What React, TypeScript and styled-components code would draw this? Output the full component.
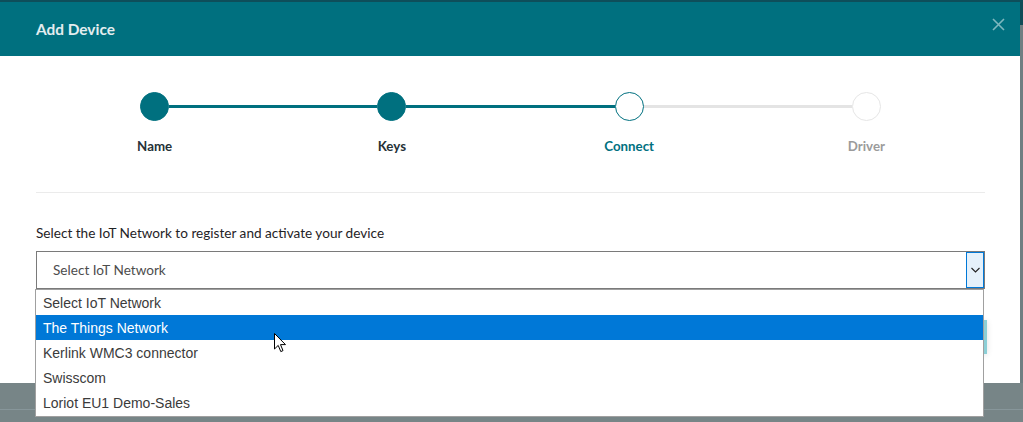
import React from "react";
import styled, { createGlobalStyle } from "styled-components";

const teal = "#00707f";

const GlobalStyle = createGlobalStyle`
    html, body {
        margin: 0;
        padding: 0;
        background: #778587;
        overflow: hidden;
    }
    * {
        box-sizing: border-box;
    }
`;

const Page = styled.div`
    position: relative;
    width: 1023px;
    height: 422px;
    overflow: hidden;
    display: flex;
    flex-direction: column;
    background: #778587;
    font-family: Lato, "Open Sans", sans-serif;
`;

const NavPeek = styled.div`
    height: 2px;
    flex: none;
    background: #0e4e5a;
`;

const Stage = styled.div`
    display: flex;
    flex: none;
`;

const ScrollStrip = styled.div`
    flex: 1;
    background: linear-gradient(#0f4c57 0 23px, #6f7f82 23px);
`;

const Modal = styled.div`
    width: 1020px;
    height: 381px;
    display: flex;
    flex-direction: column;
    background: #fff;
`;

const Header = styled.div`
    height: 54px;
    flex: none;
    display: flex;
    align-items: center;
    justify-content: space-between;
    padding: 0 15px 0 36px;
    background: ${teal};
`;

const Title = styled.h1`
    margin: 0;
    font-size: 15.4px;
    font-weight: 700;
    color: #e4edef;
`;

const CloseButton = styled.button`
    display: flex;
    border: none;
    background: none;
    padding: 0;
    margin-top: -9px;
    cursor: pointer;
`;

const Body = styled.div`
    flex: 1;
    display: flex;
    flex-direction: column;
    padding: 36px 35px 0 36px;
`;

const Stepper = styled.div`
    display: grid;
    grid-template-columns: repeat(4, 1fr);
`;

const Step = styled.div`
    display: flex;
    flex-direction: column;
    align-items: center;
`;

const Track = styled.div`
    width: 100%;
    height: 29px;
    display: flex;
    align-items: center;
`;

const Segment = styled.div<{ $done?: boolean; $hidden?: boolean }>`
    flex: 1;
    height: 3px;
    background: ${(p) => (p.$hidden ? "transparent" : p.$done ? teal : "#e4e4e4")};
`;

const Dot = styled.div<{ $state: StepState }>`
    flex: none;
    width: 29px;
    height: 29px;
    border-radius: 50%;
    background: ${(p) => (p.$state === "done" ? teal : "#fff")};
    border: 1px solid ${(p) => (p.$state === "todo" ? "#e6e6e6" : teal)};
`;

const StepLabel = styled.div<{ $state: StepState }>`
    margin-top: 17px;
    font-size: 13.3px;
    font-weight: 700;
    line-height: 16px;
    color: ${(p) => (p.$state === "done" ? "#263238" : p.$state === "current" ? teal : "#9b9b9b")};
`;

const Divider = styled.hr`
    margin: 38px 0 0;
    border: none;
    border-top: 1px solid #ebebeb;
`;

const FieldLabel = styled.label`
    display: block;
    margin-top: 32px;
    font-size: 13.6px;
    line-height: 16px;
    color: #1f2326;
`;

const SelectWrap = styled.div`
    position: relative;
    margin-top: 10px;
`;

const SelectBox = styled.div`
    height: 38px;
    display: flex;
    align-items: center;
    justify-content: space-between;
    border: 1px solid #7a7a7a;
    padding-left: 16px;
    font-size: 13.6px;
    color: #4d4d4d;
`;

const ArrowButton = styled.div`
    width: 18px;
    height: 36px;
    display: flex;
    align-items: center;
    justify-content: center;
    background: #e5f1fb;
    border: 1px solid #0078d7;
`;

const OptionList = styled.ul`
    position: absolute;
    top: 100%;
    left: -1px;
    right: 1px;
    z-index: 2;
    margin: 0;
    padding: 0;
    list-style: none;
    background: #fff;
    border: 1px solid #a0a0a0;
`;

const Option = styled.li<{ $active?: boolean }>`
    height: 25.2px;
    display: flex;
    align-items: center;
    padding-left: 7px;
    font-family: "Liberation Sans", Arial, sans-serif;
    font-size: 14px;
    color: ${(p) => (p.$active ? "#fff" : "#3b3b3b")};
    background: ${(p) => (p.$active ? "#0078d7" : "transparent")};
`;

const Actions = styled.div`
    display: flex;
    justify-content: flex-end;
    margin-top: 31px;
    margin-right: -2px;
`;

const NextButton = styled.button`
    width: 120px;
    height: 34px;
    border: none;
    background: #8ccfd6;
    box-shadow: 0 1px 6px rgba(0, 0, 0, 0.12);
    color: #fff;
    font: 700 13px Lato, sans-serif;
`;

const BackdropLine = styled.div`
    margin-top: 26px;
    height: 1px;
    background: #87969a;
`;

const Pointer = styled.svg`
    position: absolute;
    left: 274px;
    top: 333px;
    z-index: 5;
`;

type StepState = "done" | "current" | "todo";

const steps: { name: string; state: StepState }[] = [
    { name: "Name", state: "done" },
    { name: "Keys", state: "done" },
    { name: "Connect", state: "current" },
    { name: "Driver", state: "todo" },
];

const networks = [
    "Select IoT Network",
    "The Things Network",
    "Kerlink WMC3 connector",
    "Swisscom",
    "Loriot EU1 Demo-Sales",
];

export default function App() {
    const current = steps.findIndex((s) => s.state === "current");
    return (
        <Page>
            <GlobalStyle />
            <NavPeek />
            <Stage>
                <Modal>
                    <Header>
                        <Title>Add Device</Title>
                        <CloseButton aria-label="Close">
                            <svg width="13" height="13" viewBox="0 0 13 13">
                                <path d="M1 1 L12 12 M12 1 L1 12" stroke="#7fb8bf" strokeWidth="1.6" />
                            </svg>
                        </CloseButton>
                    </Header>
                    <Body>
                        <Stepper>
                            {steps.map((s, i) => (
                                <Step key={s.name}>
                                    <Track>
                                        <Segment $hidden={i === 0} $done={i <= current} />
                                        <Dot $state={s.state} />
                                        <Segment $hidden={i === steps.length - 1} $done={i < current} />
                                    </Track>
                                    <StepLabel $state={s.state}>{s.name}</StepLabel>
                                </Step>
                            ))}
                        </Stepper>
                        <Divider />
                        <FieldLabel>Select the IoT Network to register and activate your device</FieldLabel>
                        <SelectWrap>
                            <SelectBox>
                                Select IoT Network
                                <ArrowButton>
                                    <svg width="9" height="6" viewBox="0 0 9 6">
                                        <path d="M0.5 1 L4.5 5 L8.5 1" fill="none" stroke="#222" strokeWidth="1.1" />
                                    </svg>
                                </ArrowButton>
                            </SelectBox>
                            <OptionList>
                                {networks.map((n, i) => (
                                    <Option key={n} $active={i === 1}>
                                        {n}
                                    </Option>
                                ))}
                            </OptionList>
                        </SelectWrap>
                        <Actions>
                            <NextButton>Next</NextButton>
                        </Actions>
                    </Body>
                </Modal>
                <ScrollStrip />
            </Stage>
            <BackdropLine />
            <Pointer width="13" height="21" viewBox="0 0 13 21">
                <path
                    d="M0.5 0.5 L0.5 16 L4.2 12.4 L6.8 18.6 L9 17.6 L6.5 11.6 L11.5 11.6 Z"
                    fill="#fff"
                    stroke="#000"
                    strokeWidth="1"
                    strokeLinejoin="round"
                />
            </Pointer>
        </Page>
    );
}
